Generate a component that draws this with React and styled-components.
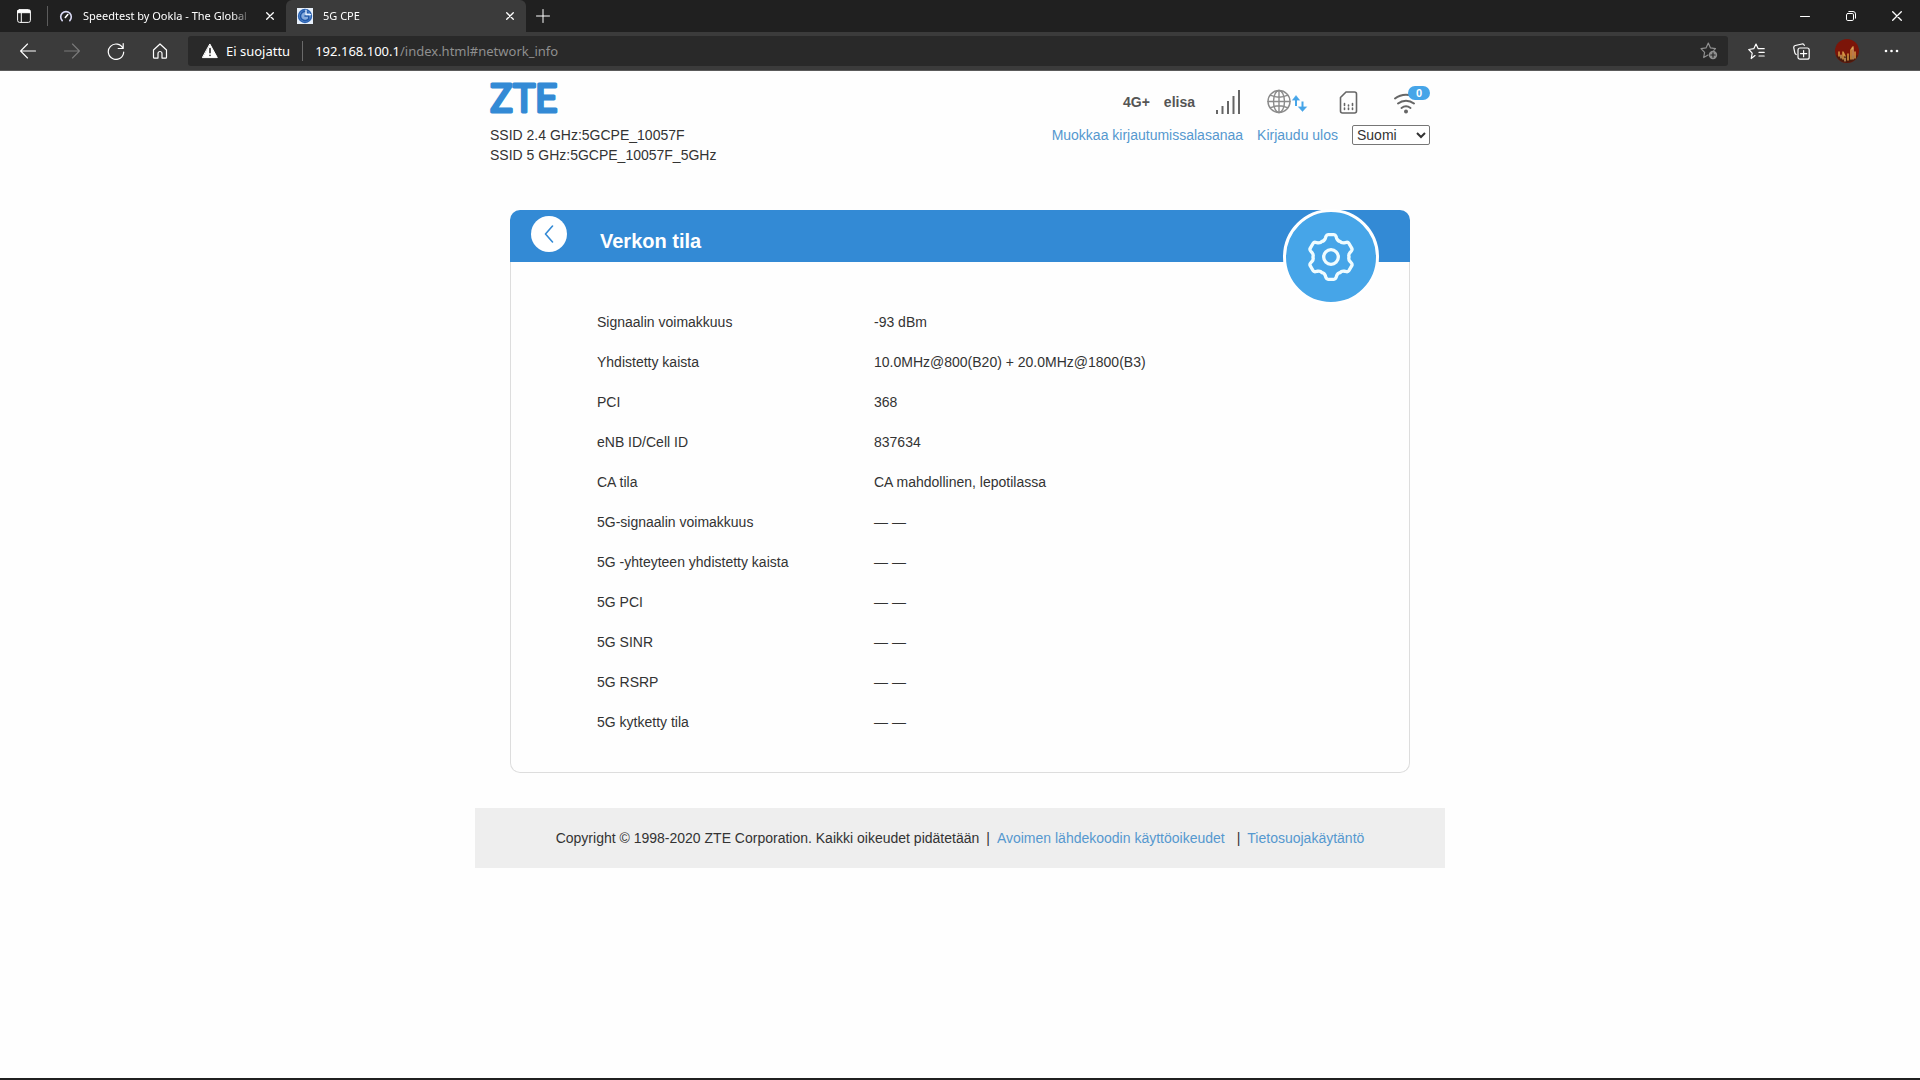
import React from 'react';
import styled, { createGlobalStyle } from 'styled-components';

const GlobalStyle = createGlobalStyle`
  * {
    box-sizing: border-box;
  }
  body {
    margin: 0;
    background: #fefefe;
    color: #333;
    font-family: "Liberation Sans", Arial, sans-serif;
    font-size: 14px;
    line-height: 20px;
  }
  button {
    padding: 0;
    border: 0;
    background: none;
    color: inherit;
    font: inherit;
  }
  svg {
    display: block;
  }
`;

const Window = styled.div`
  display: flex;
  flex-direction: column;
  min-height: 100vh;
  border-bottom: 2px solid #202020;
`;

/* browser chrome */

const TitleBar = styled.div`
  display: flex;
  align-items: center;
  height: 32px;
  background: #202020;
  color: #fff;
  font-family: "Noto Sans", sans-serif;
  font-size: 11px;
`;

const TabMenu = styled.button`
  display: flex;
  justify-content: center;
  width: 47px;
`;

const TabDivider = styled.span`
  width: 1px;
  height: 20px;
  background: #5c5c5c;
`;

const Tab = styled.div`
  display: flex;
  align-items: center;
  gap: 10px;
  width: ${({ $active }) => ($active ? 240 : 238)}px;
  height: 32px;
  padding: 0 8px 0 11px;
  border-radius: 6px 6px 0 0;
  background: ${({ $active }) => ($active ? '#3b3b3b' : 'transparent')};
`;

const TabTitle = styled.button`
  flex: 1;
  min-width: 0;
  text-align: left;
  white-space: nowrap;
  mask-image: linear-gradient(to right, #000 88%, transparent);
`;

const TabClose = styled.button`
  display: flex;
  align-items: center;
  justify-content: center;
  width: 16px;
  height: 16px;
`;

const NewTab = styled.button`
  display: flex;
  justify-content: center;
  width: 34px;
`;

const WindowButtons = styled.div`
  display: flex;
  margin-left: auto;
`;

const WindowButton = styled.button`
  display: flex;
  align-items: center;
  justify-content: center;
  width: 46px;
  height: 32px;
`;

const Toolbar = styled.div`
  display: flex;
  align-items: center;
  height: 39px;
  padding: 0 6px;
  border-bottom: 1px solid #5a5a5a;
  background: #3b3b3b;
  color: #fff;
  font-family: "Noto Sans", sans-serif;
  font-size: 13px;
`;

const ToolButton = styled.button`
  display: flex;
  align-items: center;
  justify-content: center;
  width: ${({ $wide }) => ($wide ? 45 : 44)}px;
  height: 30px;
  color: ${({ $dim }) => ($dim ? '#7a7a7a' : '#fff')};
`;

const AddressBar = styled.div`
  display: flex;
  flex: 1;
  align-items: center;
  height: 30px;
  margin: 0 6px;
  padding: 0 10px 0 14px;
  border-radius: 3px;
  background: #292929;
`;

const Security = styled.button`
  display: flex;
  align-items: center;
  gap: 8px;
  padding-right: 12px;
  border-right: 1px solid #6a6a6a;
  white-space: nowrap;
`;

const Url = styled.div`
  flex: 1;
  padding-left: 12px;
  color: #8f8f8f;
`;

const Host = styled.span`
  color: #fff;
`;

/* router page */

const Page = styled.div`
  width: 100%;
  max-width: 970px;
  margin: 0 auto;
`;

const Header = styled.header`
  display: flex;
  justify-content: space-between;
  padding: 8px 15px 0;
`;

const Brand = styled.div`
  display: flex;
  flex-direction: column;
`;

const Logo = styled.svg`
  margin-bottom: 4px;
  overflow: visible;
`;

const HeaderRight = styled.div`
  display: flex;
  flex-direction: column;
  align-items: flex-end;
`;

const StatusBar = styled.div`
  display: flex;
  align-items: center;
  height: 46px;
  color: #555;
  font-weight: bold;
`;

const Operator = styled.span`
  margin: 0 20px 0 14px;
`;

const StatusIcon = styled.span`
  display: flex;
  margin-right: ${({ $gap }) => $gap}px;
`;

const WifiStatus = styled.span`
  position: relative;
  width: 38px;
  height: 32px;
`;

const Badge = styled.span`
  position: absolute;
  top: 0;
  right: 0;
  width: 22px;
  height: 14px;
  border-radius: 7px;
  background: #46a5e8;
  color: #fff;
  font-size: 11px;
  line-height: 14px;
  text-align: center;
`;

const AccountBar = styled.div`
  display: flex;
  align-items: center;
  gap: 14px;
`;

const Link = styled.a`
  color: #5598cf;
  text-decoration: none;
`;

const LanguageSelect = styled.select`
  width: 78px;
  height: 20px;
  padding: 0;
  border: 1px solid #767676;
  border-radius: 2px;
  background: #fff;
  color: #333;
  font: inherit;
`;

const Card = styled.main`
  position: relative;
  margin: 45px 35px 35px;
`;

const CardHeader = styled.div`
  display: flex;
  align-items: flex-start;
  gap: 33px;
  height: 52px;
  padding: 6px 21px;
  border-radius: 10px 10px 0 0;
  background: #338ad5;
`;

const BackButton = styled.button`
  display: flex;
  align-items: center;
  justify-content: center;
  width: 36px;
  height: 36px;
  border-radius: 50%;
  background: #fff;
`;

const Title = styled.h1`
  margin: 0;
  padding-top: 10px;
  color: #fff;
  font-size: 20px;
  line-height: 30px;
`;

const SettingsMark = styled.div`
  position: absolute;
  top: -1px;
  right: 31px;
  width: 96px;
  height: 96px;
  border: 3px solid #fff;
  border-radius: 50%;
  background: #46a5e8;
`;

const CardBody = styled.div`
  padding: 40px 85px 30px;
  border: 1px solid #ddd;
  border-top: 0;
  border-radius: 0 0 10px 10px;
`;

const InfoTable = styled.table`
  width: 100%;
  border-collapse: collapse;
  table-layout: fixed;
`;

const Label = styled.th`
  width: 278px;
  height: 40px;
  padding: 0 0 0 1px;
  font-weight: normal;
  text-align: left;
`;

const Value = styled.td`
  padding: 0;
`;

const Footer = styled.footer`
  display: flex;
  align-items: center;
  justify-content: center;
  gap: 7px;
  height: 60px;
  background: #eee;
`;

const PolicyLinks = styled.span`
  display: flex;
  gap: 12px;
`;

const rows = [
  ['Signaalin voimakkuus', '-93 dBm'],
  ['Yhdistetty kaista', '10.0MHz@800(B20) + 20.0MHz@1800(B3)'],
  ['PCI', '368'],
  ['eNB ID/Cell ID', '837634'],
  ['CA tila', 'CA mahdollinen, lepotilassa'],
  ['5G-signaalin voimakkuus', '— —'],
  ['5G -yhteyteen yhdistetty kaista', '— —'],
  ['5G PCI', '— —'],
  ['5G SINR', '— —'],
  ['5G RSRP', '— —'],
  ['5G kytketty tila', '— —'],
];

// one tooth of the gear, repeated every 60 degrees
const tooth = [
  ['Q', [-20, -48], [-17, -56]],
  ['L', [-15, -62]],
  ['Q', [-13, -67], [-9, -67]],
  ['L', [9, -67]],
  ['Q', [13, -67], [15, -62]],
  ['L', [17, -56]],
  ['Q', [20, -48], [27, -47]],
];

const rotate = ([x, y], deg) => {
  const a = (deg * Math.PI) / 180;
  const c = Math.cos(a);
  const s = Math.sin(a);
  return `${(x * c - y * s).toFixed(1)} ${(x * s + y * c).toFixed(1)}`;
};

const gearPath = () => {
  let d = 'M-27 -47';
  for (let i = 0; i < 6; i++) {
    tooth.forEach(([cmd, ...points]) => {
      d += cmd + points.map((p) => rotate(p, i * 60)).join(' ');
    });
  }
  return d + 'Z';
};

const Icon = ({ w = 16, h = w, sw = 1, children, ...rest }) => (
  <svg width={w} height={h} viewBox={`0 0 ${w} ${h}`} fill="none" stroke="currentColor" strokeWidth={sw}
    strokeLinecap="round" strokeLinejoin="round" aria-hidden="true" {...rest}>
    {children}
  </svg>
);

const CloseIcon = ({ size = 8 }) => (
  <Icon w={size} sw={1.3}><path d={`M.7.7 ${size - 0.7} ${size - 0.7}M${size - 0.7}.7.7 ${size - 0.7}`} /></Icon>
);

const BrowserBar = () => (
  <>
    <TitleBar>
      <TabMenu aria-label="Välilehdet">
        <Icon w={14}>
          <rect x=".6" y=".6" width="12.8" height="12.8" rx="2" />
          <path d="M1 1.5h12v2.2H1zM4.3 4v9" fill="currentColor" />
        </Icon>
      </TabMenu>
      <TabDivider />
      <Tab>
        <Icon w={14} sw={1.6}>
          <path d="M3.2 11.6A5.3 5.3 0 1 1 10.8 11.6" stroke="#d9d9f5" />
          <path d="m6.3 8.5 2.5-3" stroke="#fff" />
        </Icon>
        <TabTitle>Speedtest by Ookla - The Global</TabTitle>
        <TabClose aria-label="Sulje"><CloseIcon /></TabClose>
      </Tab>
      <Tab $active>
        <Icon w={16} sw={1.6}>
          <path d="M0 0h16v16H0z" fill="#e8f0fa" stroke="none" />
          <circle cx="8" cy="8" r="6.4" fill="#86abdc" stroke="#2c64b4" />
          <path d="M11 4.5a4.6 4.6 0 1 0 .8 6.2V8H8" stroke="#2058a8" />
          <path d="M9 2.2v4.4h4.6" stroke="#e8f2ff" strokeWidth="1.3" />
        </Icon>
        <TabTitle>5G CPE</TabTitle>
        <TabClose aria-label="Sulje"><CloseIcon /></TabClose>
      </Tab>
      <NewTab aria-label="Uusi välilehti">
        <Icon w={14}><path d="M7 .5v13M.5 7h13" /></Icon>
      </NewTab>
      <WindowButtons>
        <WindowButton aria-label="Pienennä"><Icon w={10}><path d="M.5 5.5h9" /></Icon></WindowButton>
        <WindowButton aria-label="Palauta">
          <Icon w={10}>
            <rect x=".5" y="2.5" width="7" height="7" rx="1.3" />
            <path d="M2.8.5H7A2.5 2.5 0 0 1 9.5 3v4.2" />
          </Icon>
        </WindowButton>
        <WindowButton aria-label="Sulje ikkuna"><CloseIcon size={10} /></WindowButton>
      </WindowButtons>
    </TitleBar>
    <Toolbar>
      <ToolButton aria-label="Takaisin">
        <Icon sw={1.1}><path d="M15.5 8H.7M7.5 1 .6 8l6.9 7" /></Icon>
      </ToolButton>
      <ToolButton $dim aria-label="Eteenpäin">
        <Icon sw={1.1}><path d="M.5 8h14.8M8.5 1l6.9 7-6.9 7" /></Icon>
      </ToolButton>
      <ToolButton aria-label="Päivitä">
        <Icon w={18} sw={1.2}><path d="M16 6.5A7.7 7.7 0 1 0 16.7 10M16.2 1.5v5h-5" /></Icon>
      </ToolButton>
      <ToolButton aria-label="Koti">
        <Icon sw={1.2}>
          <path d="M1.5 7 8 1l6.5 6v7.2a.9.9 0 0 1-.9.9H10v-4.6a2 2 0 0 0-4 0v4.6H2.4a.9.9 0 0 1-.9-.9z" />
        </Icon>
      </ToolButton>
      <AddressBar>
        <Security>
          <Icon>
            <path d="M8 1.3 15.3 14.6H.7z" fill="currentColor" />
            <path d="M8 5.5v4.3M8 12.3v.1" stroke="#292929" strokeWidth="1.6" />
          </Icon>
          Ei suojattu
        </Security>
        <Url><Host>192.168.100.1</Host>/index.html#network_info</Url>
        <Icon w={18} sw={1.2} color="#8f8f8f">
          <path d="M8 13 3.7 15.5l.9-5.2L1 6.7l5-.8L8.3 1l2.2 4.9 5 .8-1.7 1.7" />
          <circle cx="13" cy="13" r="4.2" fill="currentColor" stroke="none" />
          <path d="M13 10.8v4.4M10.8 13h4.4" stroke="#292929" />
        </Icon>
      </AddressBar>
      <ToolButton $wide aria-label="Suosikit">
        <Icon w={17} sw={1.2}>
          <path d="M7 12.6 3.2 15.5 4.2 10.2.8 6.5l5-.8L8 1l2.2 4.7h6M11 9.4h5.2M11 13h5.2" />
        </Icon>
      </ToolButton>
      <ToolButton $wide aria-label="Kokoelmat">
        <Icon w={17} sw={1.2}>
          <path d="M3.2 11.5A3 3 0 0 1 1.7 9.3L.8 4.8a2 2 0 0 1 1.5-2.3L9 1a2 2 0 0 1 2.3 1.4" />
          <rect x="5" y="5" width="11.2" height="11.2" rx="2" />
          <path d="M10.6 7.5v6.2M7.5 10.6h6.2" />
        </Icon>
      </ToolButton>
      <ToolButton $wide aria-label="Profiili">
        <Icon w={24}>
          <circle cx="12" cy="12" r="12" fill="#7c1509" stroke="none" />
          <path d="M1 16.5h22a12 12 0 0 1-22 0" fill="#4a1a0c" stroke="none" />
          <path d="M4 17v-4M8 20v-7l2 4M13 21v-6M16 20V11l2-3M20 19v-6" stroke="#d39343" strokeWidth="1.6" />
          <path d="M10 22v-3M18 20V9M6 19v-3" stroke="#e8bd78" strokeWidth="1.2" />
        </Icon>
      </ToolButton>
      <ToolButton $wide aria-label="Lisää">
        <Icon w={15} h={4} fill="currentColor" stroke="none">
          <circle cx="2" cy="2" r="1.3" /><circle cx="7.5" cy="2" r="1.3" /><circle cx="13" cy="2" r="1.3" />
        </Icon>
      </ToolButton>
    </Toolbar>
  </>
);

const StatusIcons = () => (
  <StatusBar>
    <span>4G+</span>
    <Operator>elisa</Operator>
    <StatusIcon $gap={26}>
      <Icon w={26} h={26} sw={2} color="#666" strokeLinecap="butt">
        <path d="M2 21v4M7.5 17v8M13 12v13M18.5 7v18M24 1v24" />
      </Icon>
    </StatusIcon>
    <StatusIcon $gap={30}>
      <Icon w={42} h={26} sw={1.4} color="#8b8b8b">
        <circle cx="12" cy="12.5" r="11" />
        <ellipse cx="12" cy="12.5" rx="5.5" ry="11" />
        <path d="M12 1.5v22M1 12.5h22M3.3 6.2c5.5 2.5 12 2.5 17.4 0M3.3 18.8c5.5-2.5 12-2.5 17.4 0" />
        <path d="M29 17V9M35.5 12.5V19" stroke="#46a5e8" strokeWidth="2" strokeLinecap="butt" />
        <path d="M25.5 11 29 6.5l3.5 4.5zM31.5 18l4 4.5 4-4.5z" fill="#46a5e8" stroke="#46a5e8" strokeWidth=".5" />
      </Icon>
    </StatusIcon>
    <StatusIcon $gap={34}>
      <Icon w={19} h={24} sw={1.6} color="#666">
        <path d="M7 2h8.5a2 2 0 0 1 2 2v17a2 2 0 0 1-2 2h-12a2 2 0 0 1-2-2V7.5z" />
        <path d="M5.5 13.5v2M5.5 18v1.5M9.5 15v1M9.5 18v1.5M13.5 13.5v2M13.5 18v1.5" />
      </Icon>
    </StatusIcon>
    <WifiStatus>
      <Icon w={30} h={30} sw={2} color="#666">
        <path d="M3 12.5a18 18 0 0 1 22 0M6 17.5a13 13 0 0 1 16 0M9.5 22a7.5 7.5 0 0 1 9 0" />
        <circle cx="14" cy="25.5" r="1" fill="currentColor" />
      </Icon>
      <Badge>0</Badge>
    </WifiStatus>
  </StatusBar>
);

const App = () => {
  return (
    <Window>
      <GlobalStyle />
      <BrowserBar />
      <Page>
        <Header>
          <Brand>
            <Logo width="80" height="42" role="img" aria-label="ZTE">
              <text x="0" y="33" fill="#338ad5" stroke="#338ad5" strokeWidth="3" strokeLinejoin="round"
                fontFamily="Roboto, sans-serif" fontSize="38">ZTE</text>
            </Logo>
            <span>SSID 2.4 GHz:5GCPE_10057F</span>
            <span>SSID 5 GHz:5GCPE_10057F_5GHz</span>
          </Brand>
          <HeaderRight>
            <StatusIcons />
            <AccountBar>
              <Link href="#password">Muokkaa kirjautumissalasanaa</Link>
              <Link href="#logout">Kirjaudu ulos</Link>
              <LanguageSelect aria-label="Kieli">
                <option>Suomi</option>
              </LanguageSelect>
            </AccountBar>
          </HeaderRight>
        </Header>
        <Card>
          <CardHeader>
            <BackButton aria-label="Takaisin">
              <Icon w={10} h={18} sw={1.6} color="#338ad5"><path d="M8.5 1 1.5 9l7 8" /></Icon>
            </BackButton>
            <Title>Verkon tila</Title>
          </CardHeader>
          <SettingsMark>
            <svg width="90" height="90" viewBox="-135 -135 270 270" fill="none" stroke="#effcff" strokeWidth="10"
              strokeLinejoin="round" aria-hidden="true">
              <path d={gearPath()} />
              <circle r="22" />
            </svg>
          </SettingsMark>
          <CardBody>
            <InfoTable>
              <tbody>
                {rows.map(([label, value]) => (
                  <tr key={label}>
                    <Label scope="row">{label}</Label>
                    <Value>{value}</Value>
                  </tr>
                ))}
              </tbody>
            </InfoTable>
          </CardBody>
        </Card>
        <Footer>
          <span>Copyright © 1998-2020 ZTE Corporation. Kaikki oikeudet pidätetään</span>
          <span>|</span>
          <PolicyLinks>
            <Link href="#opensource">Avoimen lähdekoodin käyttöoikeudet</Link>
            <span>|</span>
          </PolicyLinks>
          <Link href="#privacy">Tietosuojakäytäntö</Link>
        </Footer>
      </Page>
    </Window>
  );
};

export default App;
